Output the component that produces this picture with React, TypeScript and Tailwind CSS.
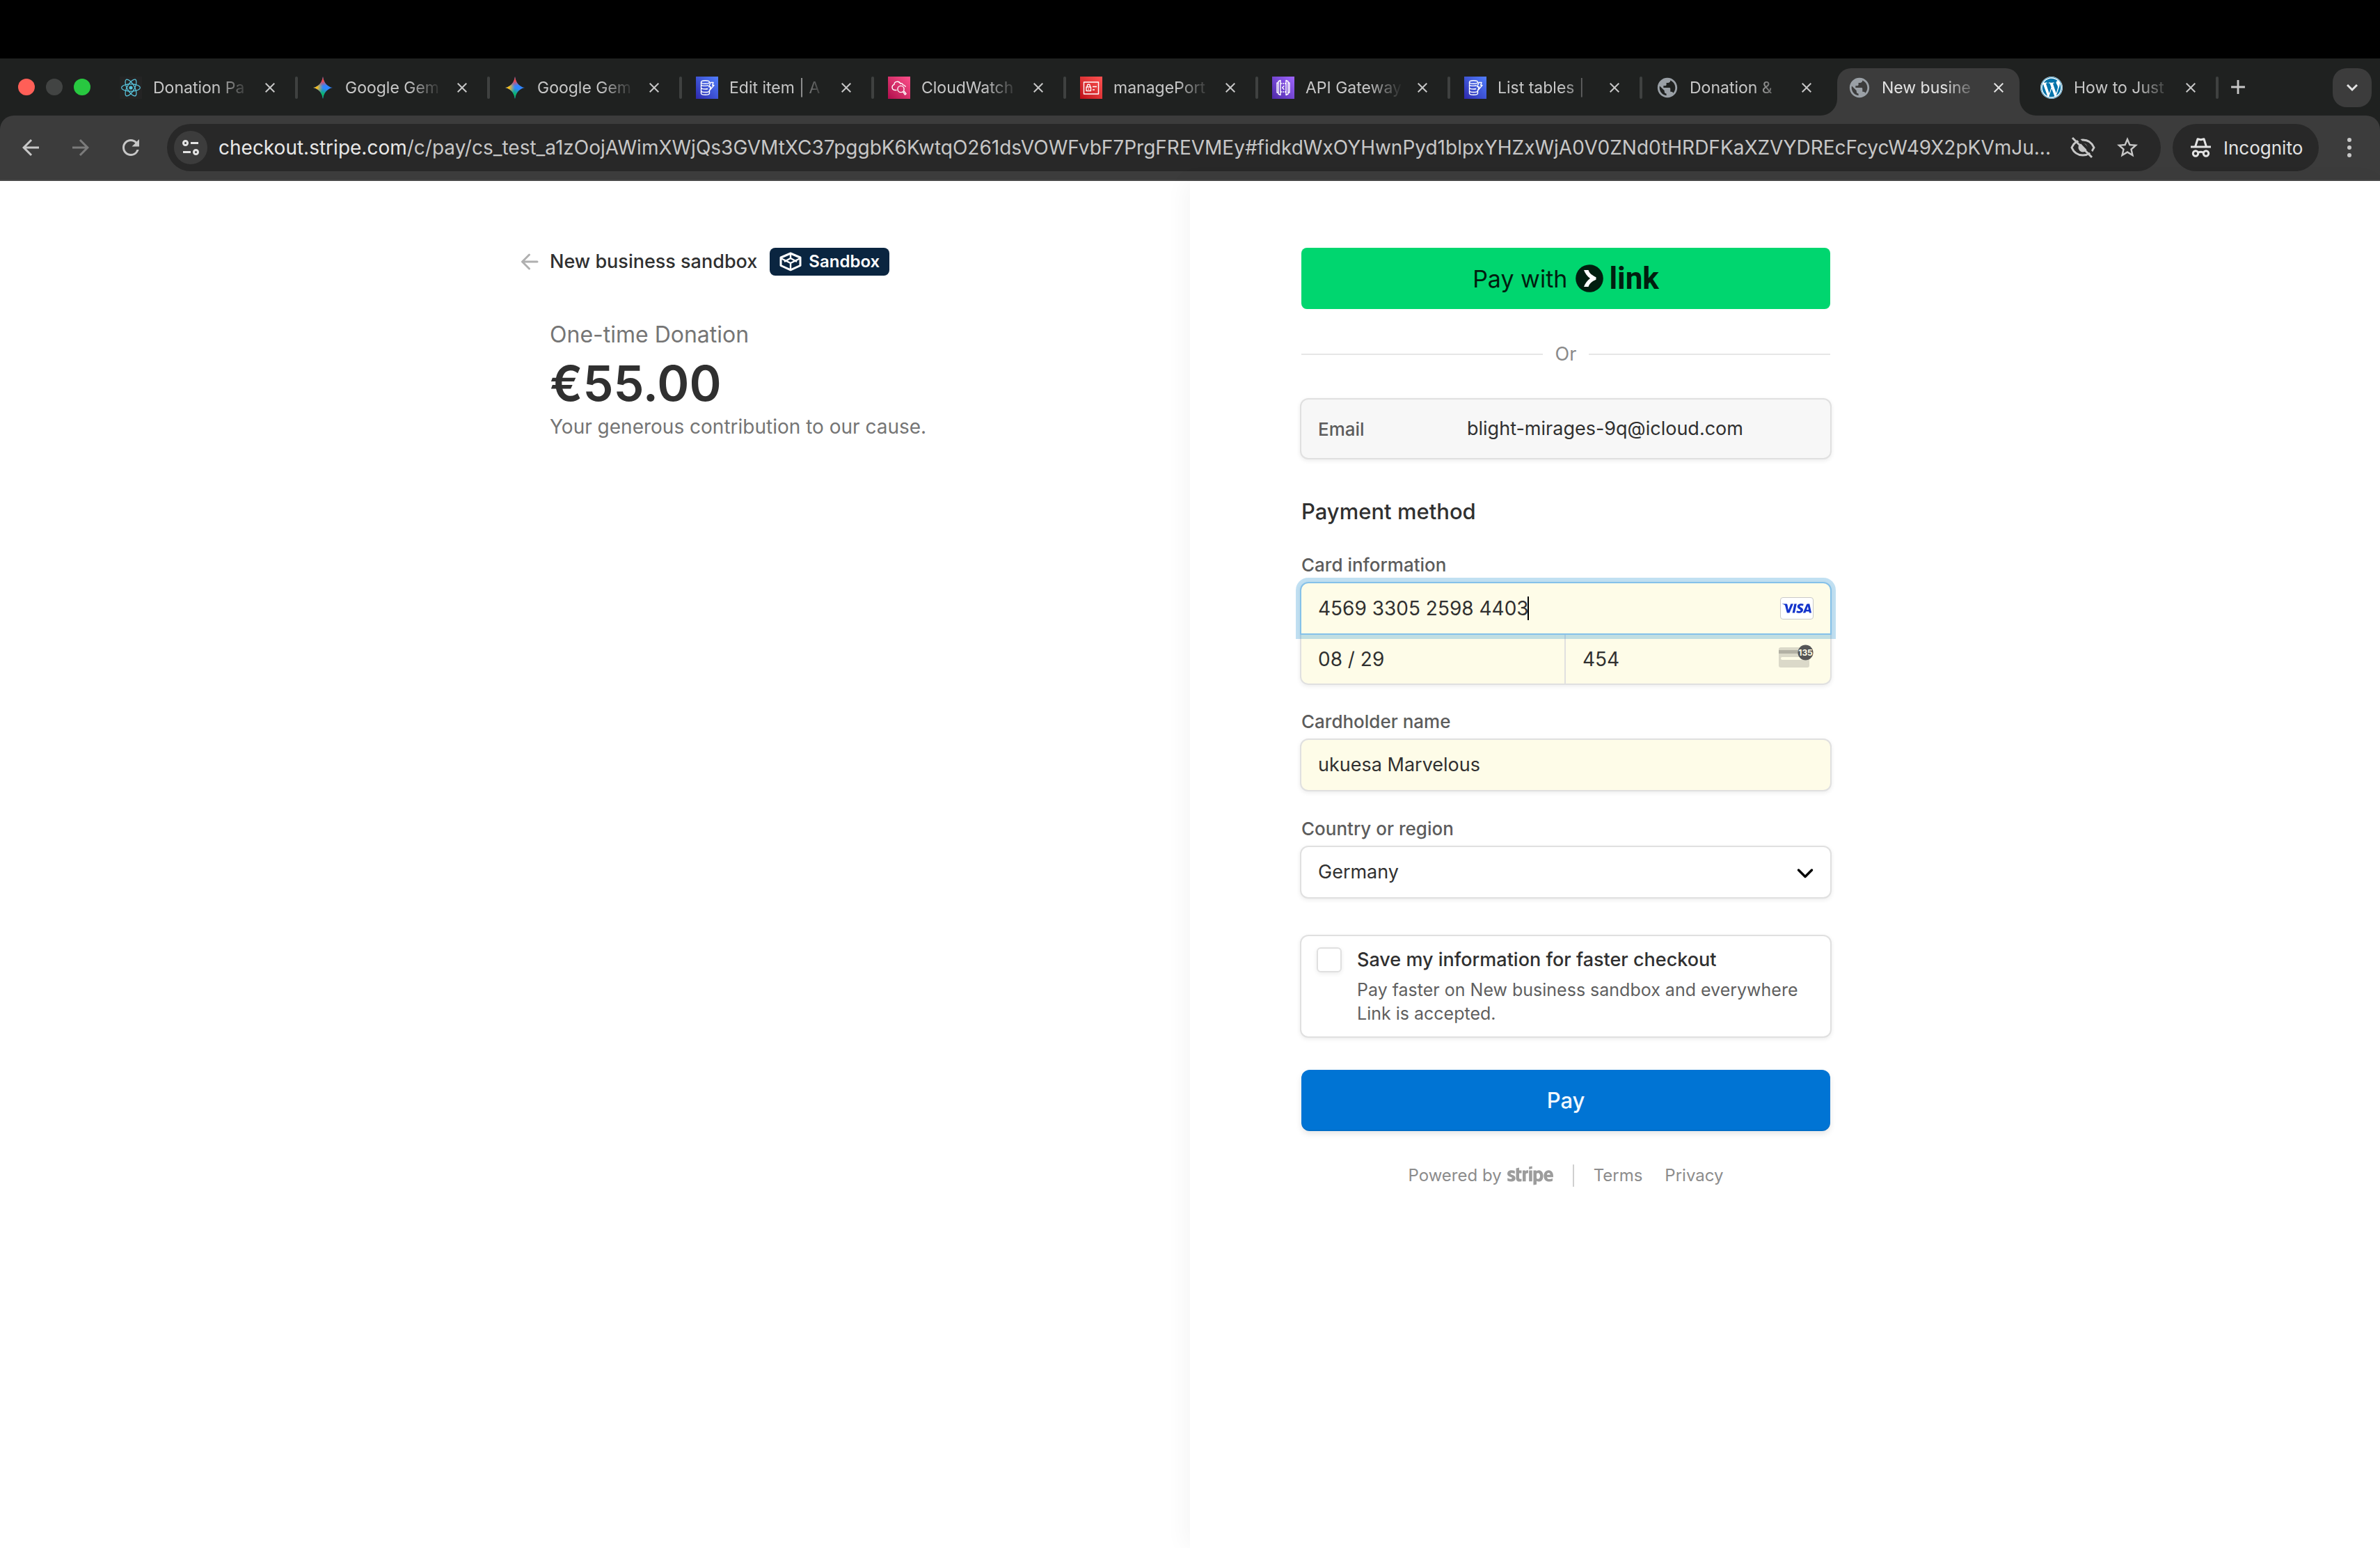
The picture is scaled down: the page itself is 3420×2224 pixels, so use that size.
import { ReactNode } from "react";
import { MdAdd, MdArrowBack, MdArrowForward, MdClose, MdPublic, MdRefresh, MdStarBorder } from "react-icons/md";
import { SiReact, SiVisa } from "react-icons/si";
import { FaStripe, FaWordpress } from "react-icons/fa";

function GeminiIcon() {
  const star = "M16 0C17 9 23 15 30 16C23 17 17 23 16 32C15 23 9 17 2 16C9 15 15 9 16 0Z";
  return (
    <svg viewBox="0 0 32 32" className="size-8" aria-hidden="true">
      <defs>
        <radialGradient id="gem-red" gradientUnits="userSpaceOnUse" cx="15" cy="1" r="13">
          <stop offset="0.4" stopColor="#f94543" />
          <stop offset="1" stopColor="#f94543" stopOpacity="0" />
        </radialGradient>
        <radialGradient id="gem-yellow" gradientUnits="userSpaceOnUse" cx="2" cy="15" r="14">
          <stop offset="0.4" stopColor="#fabc12" />
          <stop offset="1" stopColor="#fabc12" stopOpacity="0" />
        </radialGradient>
        <radialGradient id="gem-green" gradientUnits="userSpaceOnUse" cx="14" cy="31" r="15">
          <stop offset="0.4" stopColor="#08b962" />
          <stop offset="1" stopColor="#08b962" stopOpacity="0" />
        </radialGradient>
      </defs>
      <path d={star} fill="#3186ff" />
      <path d={star} fill="url(#gem-green)" />
      <path d={star} fill="url(#gem-yellow)" />
      <path d={star} fill="url(#gem-red)" />
    </svg>
  );
}

function AwsTile({ className, children }: { className: string; children: ReactNode }) {
  return (
    <span className={`block size-8 bg-linear-to-tr ${className}`}>
      <svg viewBox="0 0 32 32" className="size-8" fill="none" stroke="#fff" strokeWidth="1.4" strokeLinejoin="round" aria-hidden="true">
        {children}
      </svg>
    </span>
  );
}

function DynamoIcon() {
  return (
    <AwsTile className="from-[#2e27ad] to-[#527fff]">
      <ellipse cx="13.5" cy="8" rx="6" ry="2.2" />
      <path d="M7.5 8v3.2c0 1.2 2.7 2.2 6 2.2 1.8 0 3.400-.3 4.500-.8M7.500 12v3.800c0 1.200 2.700 2.200 6 2.200 1.400 0 2.700-.2 3.700-.5M7.500 16.500v3.800c0 1.200 2.700 2.200 6 2.200s6-1 6-2.200v-1.500M7.500 20.800v3.200c0 1.200 2.700 2.200 6 2.200s6-1 6-2.200v-3.200" />
      <path d="M21 8.500h4l-1.300 4H26l-6 7 1.300-4.800h-2.600z" />
    </AwsTile>
  );
}

function CloudWatchIcon() {
  return (
    <AwsTile className="from-[#b0084d] to-[#ff4f8b]">
      <path d="M12.500 19.500H10c-2.500-.3-4-2-4-4.200 0-2 1.200-3.400 3-3.900-.1-4.200 6.500-6 9-1.200 1.600-1 3.200 0 3.400 1.700 2 .3 3.400 1.300 3.900 3" />
      <circle cx="18.500" cy="18" r="4.600" />
      <path d="M21.500 21.800l3 4.200 1.600-1.300-3.200-4" />
    </AwsTile>
  );
}

function IamIcon() {
  return (
    <AwsTile className="from-[#bd0816] to-[#ff5252]">
      <rect x="5.500" y="8" width="21" height="17" />
      <rect x="9" y="15" width="6.500" height="5.500" />
      <path d="M10.300 15v-1.800a2 2 0 0 1 4 0V15M18 14.500h6M18 19h3" />
      <path d="M12.200 17v1.800" />
    </AwsTile>
  );
}

function ApiGatewayIcon() {
  return (
    <AwsTile className="from-[#4d27a8] to-[#a166ff]">
      <path d="M12 5.500v21l-3-1.500V7zM20 5.500v21l3-1.500V7zM9 9H7v14h2M23 9h2v14h-2" />
      <path d="M12 10h8M12 22h8" strokeDasharray="2 1" />
      <path d="M17.300 13.300L14.700 16l2.600 2.700" />
    </AwsTile>
  );
}

function GlobeIcon() {
  return <MdPublic className="size-[34px] shrink-0 text-[#9aa0a6]" />;
}

function ReactFavicon() {
  return (
    <span className="flex size-8 items-center justify-center bg-[#242424]">
      <SiReact className="size-7 text-[#58c4dc]" />
    </span>
  );
}

function WordPressFavicon() {
  return (
    <span className="flex size-8 items-center justify-center rounded-full bg-white">
      <FaWordpress className="size-8 text-[#0073aa]" />
    </span>
  );
}

const tabs: { title: string; icon: ReactNode; active?: boolean; divider?: boolean }[] = [
  { title: "Donation Pa", icon: <ReactFavicon />, divider: true },
  { title: "Google Gem", icon: <GeminiIcon />, divider: true },
  { title: "Google Gem", icon: <GeminiIcon />, divider: true },
  { title: "Edit item | A", icon: <DynamoIcon />, divider: true },
  { title: "CloudWatch", icon: <CloudWatchIcon />, divider: true },
  { title: "managePort", icon: <IamIcon />, divider: true },
  { title: "API Gateway", icon: <ApiGatewayIcon />, divider: true },
  { title: "List tables |", icon: <DynamoIcon />, divider: true },
  { title: "Donation &", icon: <GlobeIcon /> },
  { title: "New busine", icon: <GlobeIcon />, active: true },
  { title: "How to Just", icon: <WordPressFavicon />, divider: true },
];

function Flare({ className }: { className: string }) {
  return (
    <svg viewBox="0 0 24 24" className={`absolute bottom-0 size-6 ${className}`} fill="#3c3c3c" aria-hidden="true">
      <path d="M24 0A24 24 0 0 1 0 24H24Z" />
    </svg>
  );
}

function TabStrip() {
  return (
    <div className="flex h-[82px] items-stretch bg-[#1f2120]">
      <div className="flex w-[152px] shrink-0 items-center gap-4 pl-[26px]">
        <span className="size-6 rounded-full bg-[#ff5f57]" />
        <span className="size-6 rounded-full bg-[#424443]" />
        <span className="size-6 rounded-full bg-[#28c840]" />
      </div>
      {tabs.map((tab, i) => (
        <div key={i} className="relative w-[276px] shrink-0">
          {tab.active && (
            <div className="absolute top-3.5 right-2.5 bottom-0 left-1 rounded-t-[20px] bg-[#3c3c3c]">
              <Flare className="-left-6" />
              <Flare className="-right-6 -scale-x-100" />
            </div>
          )}
          <div className="relative flex h-full items-center pt-0.5 pl-5">
            <span className="flex size-8 shrink-0 items-center justify-center">{tab.icon}</span>
            <button
              className={`ml-4 w-[140px] overflow-hidden text-left text-[23px] leading-8 whitespace-nowrap [mask-image:linear-gradient(to_right,#000_65%,transparent)] ${tab.active ? "text-[#e3e3e3]" : "text-[#c7c7c7]"}`}
            >
              {tab.title}
            </button>
            <button aria-label="Close tab" className={`ml-4 ${tab.active ? "text-[#e3e3e3]" : "text-[#c7c7c7]"}`}>
              <MdClose className="size-6" />
            </button>
            {tab.divider && <span className="ml-6 h-8 w-1 rounded-full bg-[#3f4140]" />}
          </div>
        </div>
      ))}
      <button aria-label="New tab" className="flex w-[56px] items-center justify-center text-[#c7c7c7]">
        <MdAdd className="size-[34px]" />
      </button>
      <button aria-label="Search tabs" className="mt-3.5 mr-3 ml-auto flex h-14 w-14 items-center justify-center rounded-[20px] bg-[#3c3c3c]">
        <svg viewBox="0 0 16 12" className="h-3 w-4" fill="none" stroke="#e3e3e3" strokeWidth="3" aria-hidden="true">
          <path d="M1 2l7 7 7-7" />
        </svg>
      </button>
    </div>
  );
}

function Toolbar() {
  return (
    <div className="bg-[#1f2120]">
      <div className="flex h-[94px] items-center rounded-t-[20px] border-b-2 border-[#484848] bg-[#3c3c3c] pr-8 pl-[26px] text-[#c7c7c7]">
        <div className="mr-[34px] flex gap-9">
          <button aria-label="Back"><MdArrowBack className="size-9" /></button>
          <button aria-label="Forward" className="text-[#7b7b7b]"><MdArrowForward className="size-9" /></button>
          <button aria-label="Reload"><MdRefresh className="size-9" /></button>
        </div>
        <div className="flex h-[68px] min-w-0 flex-1 items-center rounded-full bg-[#282828] pr-[30px] pl-2.5">
          <button aria-label="Site information" className="mr-4 flex size-12 shrink-0 items-center justify-center rounded-full bg-[#3c3c3c]">
            <svg viewBox="0 0 24 24" className="size-6" fill="none" stroke="#e3e3e3" strokeWidth="3" aria-hidden="true">
              <circle cx="4.500" cy="5.500" r="3" />
              <path d="M12 5.500h11M1 18.500h11" />
              <circle cx="19.500" cy="18.500" r="3" />
            </svg>
          </button>
          <div role="textbox" aria-label="Address" className="min-w-0 flex-1 overflow-hidden text-[28px] leading-9 whitespace-nowrap">
            <span className="text-[#e8e8e8]">checkout.stripe.com</span>
            /c/pay/cs_test_a1zOojAWimXWjQs3GVMtXC37pggbK6KwtqO261dsVOWFvbF7PrgFREVMEy#fidkdWxOYHwnPyd1blpxYHZxWjA0V0ZNd0tHRDFKaXZVYDREcFcycW49X2pKVmJu...
          </div>
          <button aria-label="Third-party cookies blocked" className="mr-7 shrink-0">
            <svg viewBox="0 0 36 36" className="size-9" fill="none" stroke="currentColor" strokeWidth="3" aria-hidden="true">
              <path d="M2 18C5 11 11 7 18 7s13 4 16 11c-3 7-9 11-16 11S5 25 2 18Z" />
              <circle cx="18" cy="18" r="5" fill="currentColor" />
              <path d="M7 1l28 29" stroke="#282828" strokeWidth="4" />
              <path d="M3 4l28 28" />
            </svg>
          </button>
          <button aria-label="Bookmark this tab" className="shrink-0"><MdStarBorder className="size-9" /></button>
        </div>
        <button className="mr-8 ml-[17px] flex h-[68px] w-[210px] shrink-0 items-center rounded-full bg-[#282828] pl-[26px] text-[26px] text-[#e3e3e3]">
          <svg viewBox="0 0 30 28" className="mr-[17px] h-7 w-[30px]" fill="none" stroke="currentColor" strokeWidth="3" aria-hidden="true">
            <path d="M0 13h29" />
            <path d="M6.500 13L10 1.800l4.500 1 4.500-1L22.500 13" strokeLinejoin="round" />
            <circle cx="7" cy="22.500" r="3.700" />
            <circle cx="22" cy="22.500" r="3.700" />
            <path d="M10.500 21.500c2.500-1.500 5.500-1.500 8 0" />
          </svg>
          Incognito
        </button>
        <button aria-label="Browser menu" className="flex w-6 flex-col items-center gap-[5px]">
          <span className="size-1.5 rounded-full bg-[#c7c7c7]" />
          <span className="size-1.5 rounded-full bg-[#c7c7c7]" />
          <span className="size-1.5 rounded-full bg-[#c7c7c7]" />
        </button>
      </div>
    </div>
  );
}

function SandboxIcon() {
  return (
    <svg viewBox="0 0 32 32" className="size-8" fill="none" stroke="#fff" strokeWidth="3" strokeLinejoin="round" aria-hidden="true">
      <path d="M16 4L30 10v11.500L16 27.800 2 21.500V10Z" />
      <path d="M2 11l14 7 14-7M7 16l9-5 9 5M16 4v7M16 18v9" strokeWidth="2.400" />
    </svg>
  );
}

function Summary() {
  return (
    <section className="w-[760px]">
      <header className="flex h-10 items-center">
        <button aria-label="Back" className="mr-4 -ml-[42px]">
          <svg viewBox="0 0 26 26" className="size-[26px]" fill="none" stroke="#b0b0b0" strokeWidth="3" strokeLinecap="round" strokeLinejoin="round" aria-hidden="true">
            <path d="M24 13H2.500M12.500 3l-10 10 10 10" />
          </svg>
        </button>
        <span className="text-[27px] font-medium text-[#303030]">New business sandbox</span>
        <span className="ml-[18px] flex h-10 items-center gap-2.5 rounded-lg bg-[#0a2540] px-3.5 text-[24px] font-semibold text-white">
          <SandboxIcon />
          Sandbox
        </span>
      </header>
      <h1 className="mt-[65px] text-[32px] leading-10 text-[#757575]">One-time Donation</h1>
      <p className="mt-1 text-[70px] leading-[92px] font-semibold text-[#303030]">€55.00</p>
      <p className="text-[28px] leading-8 text-[#757575]">Your generous contribution to our cause.</p>
    </section>
  );
}

function FieldLabel({ htmlFor, children }: { htmlFor: string; children: ReactNode }) {
  return (
    <label htmlFor={htmlFor} className="mb-2 block text-[26px] leading-8 font-medium text-[#5c5c5c]">
      {children}
    </label>
  );
}

function CvcIcon() {
  return (
    <svg viewBox="0 0 50 34" className="h-[34px] w-[50px]" aria-hidden="true">
      <rect x="0" y="4" width="44" height="29" rx="3" fill="#dbd9c9" />
      <rect x="0" y="8" width="44" height="5" fill="#b3b1a5" />
      <rect x="3" y="18" width="38" height="4" rx="2" fill="#fefce8" />
      <circle cx="38.500" cy="11.500" r="11" fill="#555" />
      <text x="38.500" y="16" textAnchor="middle" fontSize="12" fontWeight="700" fill="#fefce8">135</text>
    </svg>
  );
}

const box = "border-2 border-[#e0e0e0] shadow-[0_2px_6px_rgba(0,0,0,0.08)]";

function PaymentForm() {
  return (
    <form className="flex w-[760px] flex-col">
      <button type="button" className="flex h-[88px] items-center justify-center rounded-lg bg-[#00d66f] text-[34px] text-[#011e0f]">
        Pay with
        <svg viewBox="0 0 40 40" className="ml-3 size-10" aria-hidden="true">
          <circle cx="20" cy="20" r="19.800" fill="#011e0f" />
          <path d="M12 8h6.500c1.300 4.500 5.500 8 11 10.200v3.600C24 24 19.800 27.500 18.500 32H12c1.500-4.500 4.800-9 9-12-4.200-3-7.500-7.500-9-12Z" fill="#fff" />
        </svg>
        <span className="ml-2 font-['Roboto',sans-serif] text-[44px] leading-none font-bold">link</span>
      </button>
      <div className="flex h-32 items-center gap-[18px] pt-0.5 text-[27px] text-[#8a8a8a]">
        <span className="h-0.5 flex-1 bg-[#e6e6e6]" />
        Or
        <span className="h-0.5 flex-1 bg-[#e6e6e6]" />
      </div>
      <div className={`-mx-0.5 flex h-[88px] items-center rounded-xl bg-[#f7f7f7] pl-6 ${box}`}>
        <label htmlFor="email" className="w-[214px] text-[26px] font-medium text-[#5c5c5c]">Email</label>
        <input id="email" readOnly defaultValue="blight-mirages-9q@icloud.com" className="flex-1 text-[27px] text-[#303030] outline-none" />
      </div>

      <h2 className="mt-[55px] text-[31px] leading-10 font-medium text-[#303030]">Payment method</h2>

      <div className="mt-[41px]">
        <FieldLabel htmlFor="card">Card information</FieldLabel>
        <div className="-mx-0.5 rounded-xl shadow-[0_2px_6px_rgba(0,0,0,0.08)]">
          <div className="relative z-10 flex h-[76px] items-center rounded-t-xl border-2 border-[#85c1e9] bg-[#fefce8] pr-6 pl-6 shadow-[0_0_0_6px_rgba(50,151,211,0.3)]">
            <input id="card" defaultValue="4569 3305 2598 4403" className="min-w-0 flex-1 text-[28px] text-[#303030] outline-none" />
            <span className="absolute top-[19px] left-[325px] h-[34px] w-0.5 bg-black" />
            <span className="flex h-8 w-12 items-center justify-center rounded-sm border border-[#c9c9c9] bg-white">
              <SiVisa className="size-[42px] text-[#1434cb]" />
            </span>
          </div>
          <div className="flex h-[72px] overflow-hidden rounded-b-xl border-2 border-t-0 border-[#e0e0e0] bg-[#fefce8]">
            <input aria-label="Expiration date" defaultValue="08 / 29" className="w-1/2 min-w-0 border-r-2 border-[#e0e0e0] pl-6 text-[28px] text-[#303030] outline-none" />
            <div className="flex w-1/2 items-center pr-6 pb-2 pl-6">
              <input aria-label="CVC" defaultValue="454" className="mt-2 min-w-0 flex-1 text-[28px] text-[#303030] outline-none" />
              <CvcIcon />
            </div>
          </div>
        </div>
      </div>

      <div className="mt-[37px]">
        <FieldLabel htmlFor="name">Cardholder name</FieldLabel>
        <div className={`-mx-0.5 flex h-[76px] rounded-xl bg-[#fefce8] ${box}`}>
          <input id="name" defaultValue="ukuesa Marvelous" className="flex-1 pl-6 text-[27px] text-[#303030] outline-none" />
        </div>
      </div>

      <div className="mt-[38px]">
        <FieldLabel htmlFor="country">Country or region</FieldLabel>
        <div className={`relative -mx-0.5 flex h-[76px] rounded-xl bg-white ${box}`}>
          <select id="country" className="flex-1 appearance-none pl-6 text-[27px] text-[#303030] outline-none">
            <option>Germany</option>
          </select>
          <svg viewBox="0 0 24 16" className="pointer-events-none absolute top-[30px] right-6 h-4 w-6" fill="none" stroke="#000" strokeWidth="3.500" strokeLinecap="round" strokeLinejoin="round" aria-hidden="true">
            <path d="M2.500 3L12 12.500 21.500 3" />
          </svg>
        </div>
      </div>

      <div className={`-mx-0.5 mt-[52px] flex rounded-xl bg-white px-[22px] py-4 ${box}`}>
        <input id="save" type="checkbox" className="mr-[22px] size-9 shrink-0 appearance-none rounded-md border-2 border-[#e0e0e0] bg-white shadow-[0_2px_6px_rgba(0,0,0,0.08)]" />
        <div>
          <label htmlFor="save" className="block text-[27px] leading-9 font-medium text-[#303030]">Save my information for faster checkout</label>
          <p className="mt-2 text-[25px] leading-[34px] text-[#5f5f5f]">
            Pay faster on New business sandbox and everywhere Link is accepted.
          </p>
        </div>
      </div>

      <button type="button" className="mt-[46px] h-[88px] rounded-xl bg-[#0074d4] text-[31px] font-medium text-[#f2f8fd] shadow-[inset_0_-2px_0_rgba(0,0,0,0.06),0_4px_8px_rgba(0,0,0,0.1)]">
        Pay
      </button>

      <footer className="mt-12 flex h-8 items-center justify-center text-[24px] text-[#8c8c8c]">
        Powered by
        <a href="#stripe" aria-label="stripe" className="ml-2 flex h-8 items-center overflow-hidden text-[#9c9c9c]"><FaStripe className="size-[66px]" /></a>
        <span className="mx-7 h-8 w-0.5 bg-[#d0d0d0]" />
        <a href="#terms">Terms</a>
        <a href="#privacy" className="ml-8">Privacy</a>
      </footer>
    </form>
  );
}

export default function App() {
  return (
    <div className="flex min-h-screen flex-col bg-white font-['Inter',sans-serif]">
      <div className="h-[84px] bg-black" />
      <TabStrip />
      <Toolbar />
      <main className="grid flex-1 grid-cols-2">
        <div className="flex justify-end pt-24 pr-[160px]">
          <Summary />
        </div>
        <div className="bg-white pt-24 pl-[160px] shadow-[-8px_0_30px_rgba(0,0,0,0.04)]">
          <PaymentForm />
        </div>
      </main>
    </div>
  );
}
